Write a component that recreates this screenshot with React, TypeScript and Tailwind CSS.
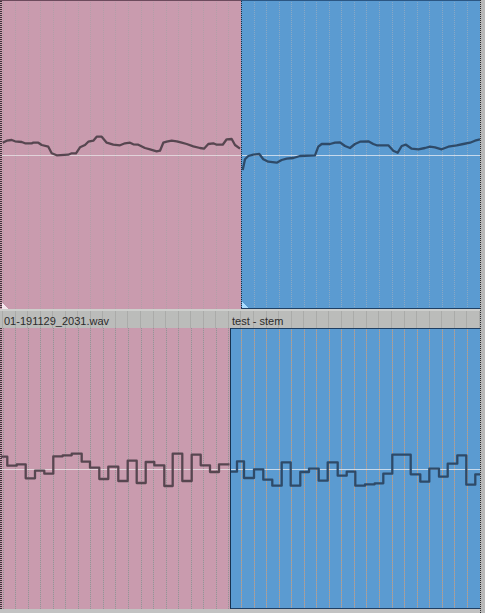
import React from "react";

type Pt = [number, number];

const GRID: number[] = Array.from({ length: 40 }, (_, k) => Math.round(2.5 + 12.55 * k) + 0.5);

function poly(pts: Pt[]) {
  return pts.map((p, i) => (i === 0 ? "M" : "L") + p[0] + " " + p[1]).join(" ");
}

function steps(bounds: number[], levels: number[], end: number) {
  let d = `M${bounds[0]} ${levels[0]}`;
  for (let i = 1; i < bounds.length; i++) {
    d += ` L${bounds[i]} ${levels[i - 1]} L${bounds[i]} ${levels[i]}`;
  }
  d += ` L${end} ${levels[levels.length - 1]}`;
  return d;
}

const topPink: Pt[] = [
  [2.7, 142.7], [6.7, 140.7], [11.7, 140], [15, 141.3], [21.7, 142], [25, 143.3], [31.7, 143.3],
  [33.3, 142.7], [38.3, 142.7], [41.7, 145], [48.3, 146.7], [51.7, 153.3], [56.7, 155.3],
  [68.3, 154.7], [71.7, 153.3], [76, 153.3], [80, 147.3], [85, 145], [88.3, 141.7], [93.3, 140.7],
  [96.7, 136.7], [101.7, 136.7], [106.7, 142.7], [113.3, 144.7], [120, 145.3], [125, 143.3],
  [130, 142.7], [133.3, 144.3], [138.3, 144.7], [145, 148], [150, 149.3], [156.7, 151.3],
  [160, 150.7], [163.3, 142.7], [166.7, 141.7], [171.7, 140.7], [176.7, 141.3], [181.7, 142.7],
  [186.7, 144], [193.3, 146.3], [200, 148], [204, 148.7], [208.3, 144], [213.3, 143.3],
  [216.7, 144.7], [222.7, 144.7], [226.7, 139.3], [231.7, 139], [235, 145], [240, 148.7],
];

const topBlue: Pt[] = [
  [242.7, 170], [245, 159.3], [248.3, 156], [253.3, 154.7], [259.3, 154], [263.3, 159.3],
  [268.3, 161.7], [276.7, 162.7], [281.7, 160], [286.7, 158.7], [293.3, 158], [300, 156],
  [315, 155.3], [318.3, 146.7], [321.7, 144], [330, 144], [335, 142.7], [340, 142.3],
  [345, 146], [350, 148], [355, 144], [360, 141.7], [368.3, 141.3], [373.3, 144], [376.7, 145.3],
  [388.3, 145.3], [393.3, 150.7], [397.7, 152.7], [401.7, 146], [406, 144.7], [411.7, 148.7],
  [418.3, 149.3], [425, 148], [430, 146.7], [435, 147.3], [441.7, 149.3], [448.3, 146.7],
  [456.7, 145.3], [463.3, 144], [470, 142.7], [475, 140.7], [480, 139.3],
];

const bpBounds = [1, 7.3, 16.7, 25.7, 35, 44.3, 53.3, 62.7, 71.7, 81.7, 90, 99.3, 108.3, 118.3, 127.7, 136.7, 145.7, 154.3, 164.3, 172.7, 182.3, 191.7, 200.7, 210, 219];
const bpLevels = [456.7, 465.7, 464.3, 478.3, 470.7, 473.7, 456.3, 455.3, 453.7, 461.7, 467.7, 479, 466.7, 481, 460.7, 483, 462, 465.3, 486, 453.7, 481, 454.7, 465.3, 472, 464.3];

const bbBounds = [231, 237, 244, 254, 263.3, 272.3, 281.7, 290.7, 300.3, 309, 318.7, 327.7, 337.7, 346.7, 355.3, 365, 374.7, 383.3, 392.3, 410.7, 420.3, 429.3, 439, 447.7, 457.3, 466.3, 475.3];
const bbLevels = [471.7, 461.3, 478, 469.3, 479.7, 485.7, 462.3, 485.7, 472, 468.7, 480.7, 462.3, 475.7, 471.7, 485.7, 484.3, 483.3, 473.7, 454.7, 474.3, 481.7, 468.7, 476.7, 463.7, 455.3, 484.7, 474.3];

type ItemProps = {
  className: string;
  x0: number;
  y0: number;
  w: number;
  h: number;
  bg: string;
  gridA: string;
  gridB: string;
  center: number;
  centerColor: string;
  wave: string;
  waveColor: string;
  children?: React.ReactNode;
};

function Item({ className, x0, y0, w, h, bg, gridA, gridB, center, centerColor, wave, waveColor, children }: ItemProps) {
  return (
    <div className={className}>
      <svg width={w} height={h} viewBox={`${x0} ${y0} ${w} ${h}`} className="block" shapeRendering="crispEdges">
        <rect x={x0} y={y0} width={w} height={h} fill={bg} />
        {GRID.filter((x) => x > x0 + 1 && x < x0 + w - 1).map((x) => (
          <g key={x}>
            <line x1={x} x2={x} y1={y0} y2={y0 + h} stroke={gridA} strokeWidth={1} strokeDasharray="1 1" />
            <line x1={x} x2={x} y1={y0 + 1} y2={y0 + h} stroke={gridB} strokeWidth={1} strokeDasharray="1 1" />
          </g>
        ))}
        <line x1={x0} x2={x0 + w} y1={center} y2={center} stroke={centerColor} strokeWidth={1} />
        <path d={wave} fill="none" stroke={waveColor} strokeWidth={2.3} strokeLinejoin="round" strokeLinecap="butt" shapeRendering="geometricPrecision" />
        {children}
      </svg>
    </div>
  );
}

export default function App() {
  return (
    <div
      className="flex w-[485px] h-[613px] overflow-hidden bg-[#bfbfbf]"
      style={{ fontFamily: '"Liberation Sans", Arial, sans-serif' }}
    >
      <div className="flex flex-col w-[480px]">
        {/* top track */}
        <div className="flex h-[309px]">
          <Item
            className="w-[241px]"
            x0={0}
            y0={0}
            w={241}
            h={309}
            bg="#c99bae"
            gridA="#b29fa8"
            gridB="#c99bae"
            center={155.5}
            centerColor="#e2d3da"
            wave={poly(topPink)}
            waveColor="#574650"
          >
            <line x1={0} x2={241} y1={0.5} y2={0.5} stroke="#6d4b5d" strokeWidth={1} />
            <line x1={1} x2={1} y1={1} y2={309} stroke="#3b3338" strokeWidth={2} strokeDasharray="1 1" />
            <polygon points="2,303 2,309 9,309" fill="#f4e4ec" />
          </Item>
          <Item
            className="w-[239px]"
            x0={241}
            y0={0}
            w={239}
            h={309}
            bg="#5b9bd1"
            gridA="#8aa8c4"
            gridB="#5b9bd1"
            center={155.5}
            centerColor="#c6d9ec"
            wave={poly(topBlue)}
            waveColor="#2e4a68"
          >
            <line x1={241} x2={480} y1={0.5} y2={0.5} stroke="#2c5783" strokeWidth={1} />
            <line x1={241} x2={480} y1={308.5} y2={308.5} stroke="#1f3f63" strokeWidth={1} />
            <line x1={241.5} x2={241.5} y1={1} y2={309} stroke="#1d2c3c" strokeWidth={1} strokeDasharray="1 1" />
            <polygon points="242,302 242,308 248,308" fill="#a9dcff" />
          </Item>
        </div>

        {/* label bar */}
        <div className="flex h-[19px] border-t-2 border-[#cdcecc] bg-[#bbbcba] bg-[image:repeating-linear-gradient(90deg,rgba(110,110,110,0.22)_0px,rgba(110,110,110,0.22)_1px,transparent_1px,transparent_12.55px)] bg-[position:2px_0] text-[11px] leading-[11px] text-[#2b2b2b]">
          <div className="w-[230px] pl-[4px] pt-[5px] whitespace-nowrap">01-191129_2031.wav</div>
          <div className="flex-1 pl-[2px] pt-[5px] whitespace-nowrap">test - stem</div>
        </div>

        {/* bottom track */}
        <div className="flex h-[281px]">
          <Item
            className="w-[230px]"
            x0={0}
            y0={328}
            w={230}
            h={281}
            bg="#c99bae"
            gridA="#9a9096"
            gridB="#b7a2ac"
            center={469.5}
            centerColor="#e2d3da"
            wave={steps(bpBounds, bpLevels, 229.5)}
            waveColor="#574650"
          >
            <line x1={1} x2={1} y1={328} y2={609} stroke="#3b3338" strokeWidth={2} strokeDasharray="1 1" />
          </Item>
          <Item
            className="w-[250px]"
            x0={230}
            y0={328}
            w={250}
            h={281}
            bg="#5b9bd1"
            gridA="#bd9b80"
            gridB="#7fa4c9"
            center={469.5}
            centerColor="#c6d9ec"
            wave={steps(bbBounds, bbLevels, 480)}
            waveColor="#2e4a68"
          >
            <line x1={230} x2={480} y1={328.5} y2={328.5} stroke="#1f3f63" strokeWidth={1} />
            <line x1={230} x2={480} y1={608.5} y2={608.5} stroke="#1f3f63" strokeWidth={2} />
            <line x1={230.5} x2={230.5} y1={328} y2={609} stroke="#18324f" strokeWidth={1} />
          </Item>
        </div>

        <div className="flex-1 bg-[#c2c2c2]" />
      </div>
      <div className="w-[5px] border-l border-dotted border-[#2a2a2a] bg-[#b9b9b9]" />
    </div>
  );
}
